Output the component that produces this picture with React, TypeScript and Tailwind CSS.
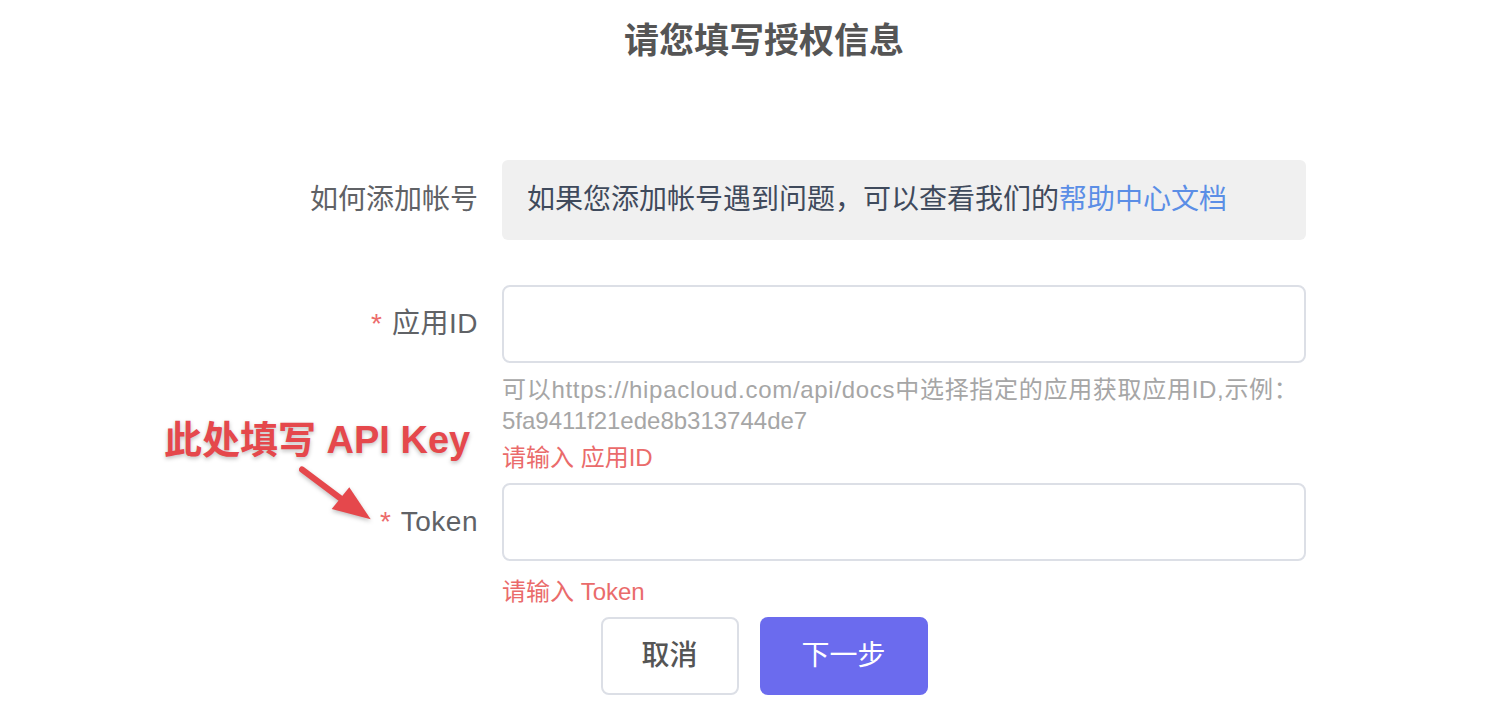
const font = { fontFamily: '"Liberation Sans", "Noto Sans CJK SC", sans-serif' };

const Required = ({ text }: { text: string }) => (
    <span>
        <span className="text-[#ec6b6b] mr-[10px]">*</span>
        <span className="tracking-[0.5px]">{text}</span>
    </span>
);

export default function App() {
    return (
        <div className="relative min-h-[718px] bg-white" style={font}>
            <div className="ml-[222px] w-[1084px]">
                <h1 className="pt-[17px] text-center text-[35px] leading-[48px] font-bold text-[#555555]">
                    请您填写授权信息
                </h1>

                {/* Row 1 */}
                <div className="mt-[95px] grid grid-cols-[280px_804px]">
                    <div className="h-[80px] pr-[24px] flex items-center justify-end text-[28px] text-[#606266]">
                        如何添加帐号
                    </div>
                    <div className="h-[80px] bg-[#f0f0f0] rounded-[6px] px-[25px] flex items-center text-[28px] text-[#3f4a5c]">
                        如果您添加帐号遇到问题，可以查看我们的
                        <a className="text-[#5b8ee6]">帮助中心文档</a>
                    </div>
                </div>

                {/* Row 2 */}
                <div className="mt-[45px] grid grid-cols-[280px_804px]">
                    <div className="h-[78px] pr-[24px] flex items-center justify-end text-[28px] text-[#606266]">
                        <Required text="应用ID" />
                    </div>
                    <div>
                        <div className="h-[78px] border-2 border-[#dcdfe6] rounded-[8px] bg-white" />
                        <p className="mt-[11px] text-[24px] leading-[31px] text-[#a6a6a6]">
                            <span className="tracking-[0.7px]">
                                可以https://hipacloud.com/api/docs中选择指定的应用获取应用ID,示例：
                            </span>
                            <br />
                            5fa9411f21ede8b313744de7
                        </p>
                        <p className="mt-[6px] text-[24px] leading-[31px] text-[#ea6b6b]">
                            请输入 应用ID
                        </p>
                    </div>
                </div>

                {/* Row 3 */}
                <div className="mt-[10px] grid grid-cols-[280px_804px]">
                    <div className="h-[78px] pr-[24px] flex items-center justify-end text-[28px] text-[#606266]">
                        <Required text="Token" />
                    </div>
                    <div>
                        <div className="h-[78px] border-2 border-[#dcdfe6] rounded-[8px] bg-white" />
                        <p className="mt-[15px] text-[24px] leading-[31px] text-[#ea6b6b]">
                            请输入 Token
                        </p>
                    </div>
                </div>

                {/* Buttons */}
                <div className="mt-[10px] flex justify-center gap-[21px]">
                    <button className="w-[138px] h-[78px] border-2 border-[#dcdfe6] rounded-[8px] bg-white text-[28px] font-medium text-[#555555]">
                        取消
                    </button>
                    <button className="w-[168px] h-[78px] rounded-[8px] bg-[#6b6bee] text-[28px] text-white">
                        下一步
                    </button>
                </div>
            </div>

            {/* Annotation */}
            <div className="absolute left-[164px] top-[416px] text-[38px] leading-[48px] font-bold text-[#e5484c] [text-shadow:0_2px_4px_rgba(0,0,0,0.25)] whitespace-nowrap">
                此处填写 API Key
            </div>
            <svg
                className="absolute left-[290px] top-[460px]"
                width="100"
                height="70"
                viewBox="0 0 100 70"
                style={{ filter: "drop-shadow(0 2px 2px rgba(0,0,0,0.25))" }}
            >
                <line x1="12" y1="9.5" x2="50" y2="38" stroke="#e5484c" strokeWidth="6" strokeLinecap="round" />
                <polygon points="41.7,49 59.3,27.3 80.7,59.3" fill="#e5484c" />
            </svg>
        </div>
    );
}
